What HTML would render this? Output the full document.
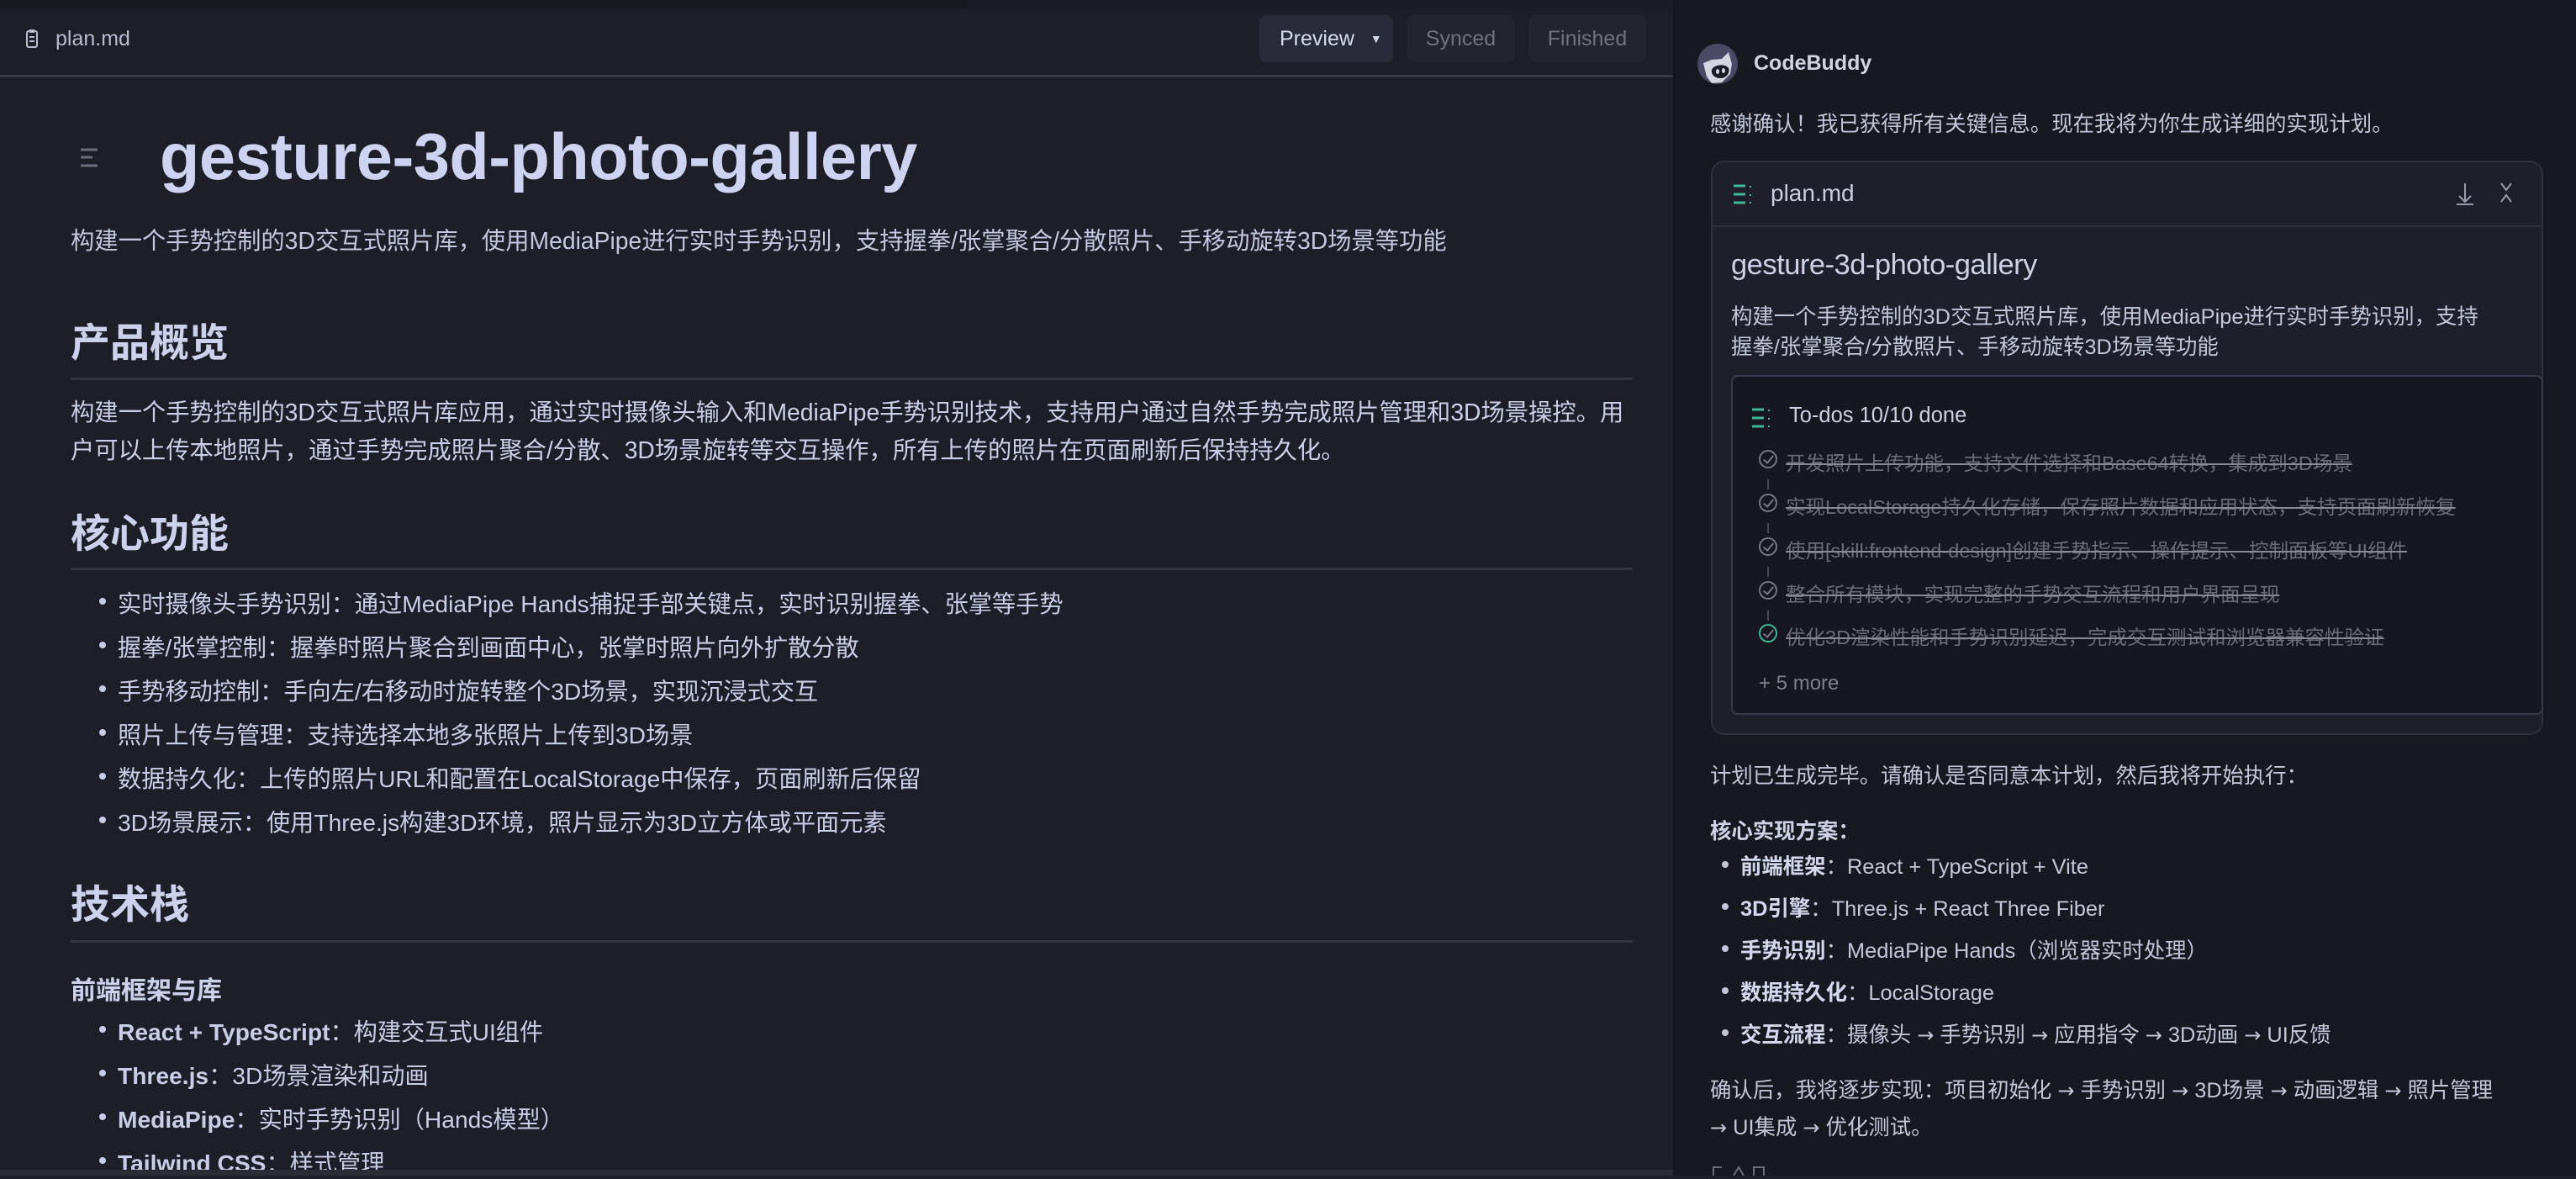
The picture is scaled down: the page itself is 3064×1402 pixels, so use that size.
<!DOCTYPE html>
<html><head><meta charset="utf-8"><style>
*{margin:0;padding:0;box-sizing:border-box}
body{width:3064px;height:1398px;overflow:hidden;background:#1e1e29;font-family:"Liberation Sans","Noto Sans CJK SC",sans-serif;color:#c9cee8;position:relative}
.a{position:absolute;white-space:nowrap}
#left{position:absolute;left:0;top:0;width:1990px;height:1398px;background:#1e1e29}
#right{position:absolute;left:1990px;top:0;width:1074px;height:1398px;background:#181820;border-left:2px solid #141419}
.hr{position:absolute;left:84px;width:1858px;height:3px;background:#35353f}
.h2{font-size:47px;font-weight:bold;color:#cdd2ec}
.p{font-size:28.3px;color:#c3c8e0}
.li{font-size:28.2px;color:#c9cee8}
.li::before{content:"";position:absolute;left:-22px;top:15px;width:8px;height:8px;border-radius:50%;background:#c9cee8}
.btn{position:absolute;top:18px;height:56px;border-radius:8px;font-size:25px;line-height:56px;text-align:center}
.r{font-size:25.4px;color:#c3c7db}
.td{font-size:23.5px;color:#6c6c78;text-decoration:line-through;text-decoration-color:#8a8a94}
.ck{position:absolute;width:22px;height:22px;border:2px solid #77777f;border-radius:50%}
.ck::after{content:"";position:absolute;left:6px;top:2px;width:5px;height:10px;border:solid #77777f;border-width:0 2px 2px 0;transform:rotate(40deg)}
.rl{font-size:25.4px;color:#c3c7db}
.rl::before{content:"";position:absolute;left:-22px;top:13px;width:8px;height:8px;border-radius:50%;background:#c3c7db}
.ar{font-family:"DejaVu Sans",sans-serif;font-size:24px}
</style></head><body>
<div id="left">
<div class="a" style="left:0;top:0;width:1150px;height:10px;background:#18181f"></div>
<div class="a" style="left:1150px;top:0;width:840px;height:10px;background:#1c1c26"></div>
<div class="a" style="left:0;top:89px;width:1990px;height:3px;background:#3a3a44"></div>
<svg class="a" style="left:30px;top:34px" width="16" height="24" viewBox="0 0 16 24"><rect x="2" y="3" width="12" height="19" rx="2" fill="none" stroke="#b8bcd0" stroke-width="2"/><rect x="5" y="1" width="6" height="4" fill="#b8bcd0"/><path d="M5 10h6M5 15h6" stroke="#b8bcd0" stroke-width="2"/></svg>
<div class="a" style="left:66px;top:32px;font-size:25px;color:#b8bcd0">plan.md</div>
<div class="btn" style="left:1498px;width:159px;background:#2a2b3a;color:#d6daf0;text-align:left;padding-left:24px">Preview <span style="font-size:14px;margin-left:12px;position:relative;top:-3px">▼</span></div>
<div class="btn" style="left:1673px;width:129px;background:#242430;color:#70727f">Synced</div>
<div class="btn" style="left:1818px;width:140px;background:#242430;color:#70727f">Finished</div>
<svg class="a" style="left:94px;top:176px" width="34" height="24" viewBox="0 0 34 24"><path d="M2 2h20M2 11h14M2 21h20" stroke="#6c6e80" stroke-width="3"/></svg>
<div class="a" style="left:190px;top:143px;font-size:77.5px;font-weight:bold;color:#cdd3f0;letter-spacing:-0.5px">gesture-3d-photo-gallery</div>
<div class="a p" style="left:84px;top:264px">构建一个手势控制的3D交互式照片库，使用MediaPipe进行实时手势识别，支持握拳/张掌聚合/分散照片、手移动旋转3D场景等功能</div>
<div class="a h2" style="left:84px;top:369px">产品概览</div>
<div class="hr" style="top:449px"></div>
<div class="a p" style="left:84px;top:468px;color:#cbd0ea">构建一个手势控制的3D交互式照片库应用，通过实时摄像头输入和MediaPipe手势识别技术，支持用户通过自然手势完成照片管理和3D场景操控。用</div>
<div class="a p" style="left:84px;top:513px;color:#cbd0ea">户可以上传本地照片，通过手势完成照片聚合/分散、3D场景旋转等交互操作，所有上传的照片在页面刷新后保持持久化。</div>
<div class="a h2" style="left:84px;top:596px">核心功能</div>
<div class="hr" style="top:675px"></div>
<div class="a li" style="left:140px;top:696px">实时摄像头手势识别：通过MediaPipe Hands捕捉手部关键点，实时识别握拳、张掌等手势</div>
<div class="a li" style="left:140px;top:748px">握拳/张掌控制：握拳时照片聚合到画面中心，张掌时照片向外扩散分散</div>
<div class="a li" style="left:140px;top:800px">手势移动控制：手向左/右移动时旋转整个3D场景，实现沉浸式交互</div>
<div class="a li" style="left:140px;top:852px">照片上传与管理：支持选择本地多张照片上传到3D场景</div>
<div class="a li" style="left:140px;top:904px">数据持久化：上传的照片URL和配置在LocalStorage中保存，页面刷新后保留</div>
<div class="a li" style="left:140px;top:956px">3D场景展示：使用Three.js构建3D环境，照片显示为3D立方体或平面元素</div>
<div class="a h2" style="left:84px;top:1037px">技术栈</div>
<div class="hr" style="top:1118px"></div>
<div class="a" style="left:84px;top:1153px;font-size:30px;font-weight:bold;color:#cdd2ec">前端框架与库</div>
<div class="a li" style="left:140px;top:1205px"><b>React + TypeScript</b>：构建交互式UI组件</div>
<div class="a li" style="left:140px;top:1257px"><b>Three.js</b>：3D场景渲染和动画</div>
<div class="a li" style="left:140px;top:1309px"><b>MediaPipe</b>：实时手势识别（Hands模型）</div>
<div class="a li" style="left:140px;top:1361px"><b>Tailwind CSS</b>：样式管理</div>
<div class="a" style="left:0;top:1391px;width:1990px;height:7px;background:#2c2c36"></div>
</div>
<div id="right">
<svg class="a" style="left:26px;top:51px" width="50" height="50" viewBox="0 0 50 50"><circle cx="25" cy="25" r="24" fill="#4a4a66"/><path d="M8 24l10-4 12-1 8-8 4 14-2 12-10 10-12 1-6-8z" fill="#d4d6e4"/><path d="M18 32c2-6 16-8 20-2 2 5-2 12-10 12-6 0-11-4-10-10z" fill="#1c1c26"/><ellipse cx="25" cy="34" rx="2" ry="3" fill="#d4d6e4"/><ellipse cx="32" cy="33" rx="2" ry="3" fill="#d4d6e4"/></svg>
<div class="a" style="left:94px;top:61px;font-size:25px;font-weight:bold;color:#d2d4e2">CodeBuddy</div>
<div class="a r" style="left:42px;top:128px">感谢确认！我已获得所有关键信息。现在我将为你生成详细的实现计划。</div>
<div class="a" style="left:43px;top:191px;width:990px;height:683px;border:2px solid #30313f;border-radius:16px;background:#1e1f2b"></div>
<div class="a" style="left:43px;top:268px;width:990px;height:2px;background:#30313f"></div>
<svg class="a" style="left:68px;top:218px" width="28" height="26" viewBox="0 0 28 26"><path d="M2 3h14M2 13h14M2 23h14" stroke="#3fb893" stroke-width="3"/><path d="M22 3v2M22 13v2M22 22v2" stroke="#3fb893" stroke-width="2"/></svg>
<div class="a" style="left:114px;top:214px;font-size:28px;color:#c9cde2">plan.md</div>
<svg class="a" style="left:925px;top:216px" width="80" height="30" viewBox="0 0 80 30"><path d="M15 2v22M8 17l7 7 7-7M5 27h20" stroke="#9a9cac" stroke-width="2" fill="none"/><path d="M58 2l6 8 6-8M58 24l6-8 6 8" stroke="#9a9cac" stroke-width="2" fill="none"/></svg>
<div class="a" style="left:67px;top:296px;font-size:34.5px;color:#cdd1e6;letter-spacing:-0.5px">gesture-3d-photo-gallery</div>
<div class="a r" style="left:67px;top:357px">构建一个手势控制的3D交互式照片库，使用MediaPipe进行实时手势识别，支持</div>
<div class="a r" style="left:67px;top:393px">握拳/张掌聚合/分散照片、手移动旋转3D场景等功能</div>
<div class="a" style="left:67px;top:446px;width:966px;height:404px;border:2px solid #3a3b4c;border-radius:8px;background:#171720"></div>
<svg class="a" style="left:90px;top:484px" width="28" height="26" viewBox="0 0 28 26"><path d="M2 3h14M2 13h14M2 23h14" stroke="#3fb893" stroke-width="3"/><path d="M22 3v2M22 13v2M22 22v2" stroke="#3fb893" stroke-width="2"/></svg>
<div class="a" style="left:136px;top:480px;font-size:25.5px;color:#cdd1e4">To-dos 10/10 done</div>
<div class="ck" style="left:100px;top:535px"></div><div class="a td" style="left:132px;top:532px">开发照片上传功能，支持文件选择和Base64转换，集成到3D场景</div>
<div class="a" style="left:110px;top:570px;width:2px;height:12px;background:#4a4a54"></div>
<div class="ck" style="left:100px;top:587px"></div><div class="a td" style="left:132px;top:584px">实现LocalStorage持久化存储，保存照片数据和应用状态，支持页面刷新恢复</div>
<div class="a" style="left:110px;top:622px;width:2px;height:12px;background:#4a4a54"></div>
<div class="ck" style="left:100px;top:639px"></div><div class="a td" style="left:132px;top:636px">使用[skill:frontend-design]创建手势指示、操作提示、控制面板等UI组件</div>
<div class="a" style="left:110px;top:674px;width:2px;height:12px;background:#4a4a54"></div>
<div class="ck" style="left:100px;top:691px"></div><div class="a td" style="left:132px;top:688px">整合所有模块，实现完整的手势交互流程和用户界面呈现</div>
<div class="a" style="left:110px;top:726px;width:2px;height:12px;background:#4a4a54"></div>
<div class="ck" style="left:100px;top:742px;border-color:#3fb893"></div><div class="a td" style="left:132px;top:739px">优化3D渲染性能和手势识别延迟，完成交互测试和浏览器兼容性验证</div>
<div class="a" style="left:100px;top:799px;font-size:24px;color:#7e8090">+ 5 more</div>
<div class="a r" style="left:42px;top:903px">计划已生成完毕。请确认是否同意本计划，然后我将开始执行：</div>
<div class="a r" style="left:42px;top:969px;font-weight:bold;color:#cdd1e6">核心实现方案：</div>
<div class="a rl" style="left:78px;top:1011px"><b style="color:#d4d8ee">前端框架</b>：React + TypeScript + Vite</div>
<div class="a rl" style="left:78px;top:1061px"><b style="color:#d4d8ee">3D引擎</b>：Three.js + React Three Fiber</div>
<div class="a rl" style="left:78px;top:1111px"><b style="color:#d4d8ee">手势识别</b>：MediaPipe Hands（浏览器实时处理）</div>
<div class="a rl" style="left:78px;top:1161px"><b style="color:#d4d8ee">数据持久化</b>：LocalStorage</div>
<div class="a rl" style="left:78px;top:1211px"><b style="color:#d4d8ee">交互流程</b>：摄像头 <span class="ar">→</span> 手势识别 <span class="ar">→</span> 应用指令 <span class="ar">→</span> 3D动画 <span class="ar">→</span> UI反馈</div>
<div class="a r" style="left:42px;top:1277px">确认后，我将逐步实现：项目初始化 <span class="ar">→</span> 手势识别 <span class="ar">→</span> 3D场景 <span class="ar">→</span> 动画逻辑 <span class="ar">→</span> 照片管理</div>
<div class="a r" style="left:42px;top:1321px"><span class="ar">→</span> UI集成 <span class="ar">→</span> 优化测试。</div>
<svg class="a" style="left:42px;top:1386px" width="120" height="12" viewBox="0 0 120 12"><path d="M4 12V2h10M28 12l6-10 6 10M52 12V2h12v10" stroke="#6a6c78" stroke-width="2" fill="none"/></svg>
</div>
</body></html>
